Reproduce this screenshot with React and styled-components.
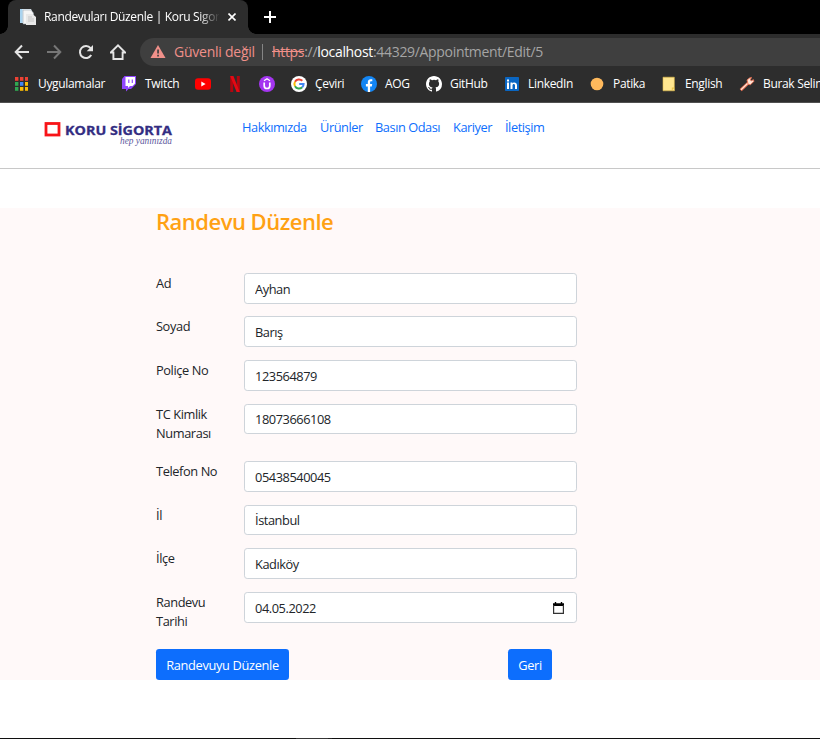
import React from 'react';
import styled, { createGlobalStyle } from 'styled-components';

const Global = createGlobalStyle`
  * { box-sizing: border-box; }
  body { margin: 0; background: #fff; overflow: hidden; font-family: "Open Sans", "Noto Sans", sans-serif; }
  svg { display: block; flex: none; }
`;

const Page = styled.div`
  width: 820px;
  height: 739px;
  display: flex;
  flex-direction: column;
  overflow: hidden;
`;
const TabStrip = styled.div`
  height: 34px;
  flex: none;
  background: #000;
  display: flex;
  padding-left: 8px;
`;
const Tab = styled.div`
  position: relative;
  width: 240px;
  height: 34px;
  background: #2d2d2d;
  border-radius: 8px 8px 0 0;
  display: flex;
  align-items: center;
  padding: 0 11px 0 12px;
  &::before, &::after {
    content: "";
    position: absolute;
    bottom: 0;
    width: 8px;
    height: 8px;
  }
  &::before { left: -8px; background: radial-gradient(circle at 0 0, transparent 7.5px, #2d2d2d 8px); }
  &::after { right: -8px; background: radial-gradient(circle at 100% 0, transparent 7.5px, #2d2d2d 8px); }
`;
const TabTitle = styled.div`
  width: 175px;
  margin: 0 9px 0 8px;
  overflow: hidden;
  white-space: nowrap;
  color: #fff;
  font-size: 12px;
  line-height: 18px;
  letter-spacing: -0.33px;
  mask-image: linear-gradient(90deg, #000 155px, transparent 176px);
`;
const NewTab = styled.div`
  display: flex;
  align-items: center;
  margin-left: 16px;
`;
const Toolbar = styled.div`
  height: 36px;
  flex: none;
  background: #2d2d2d;
  display: flex;
  align-items: center;
  padding-left: 14px;
`;
const NavIcons = styled.div`
  display: flex;
  gap: 16px;
  width: 126px;
`;
const Address = styled.div`
  flex: 1;
  height: 28px;
  border-radius: 14px 0 0 14px;
  background: #3f3f3f;
  display: flex;
  align-items: center;
  padding-left: 10px;
  font-size: 14px;
  line-height: 20px;
  color: #a5a5a5;
  white-space: nowrap;
`;
const Unsafe = styled.span`
  width: 82px;
  margin-left: 8px;
  color: #f0908a;
  letter-spacing: -0.24px;
`;
const Divider = styled.span`
  width: 1px;
  height: 16px;
  margin: 0 9px 0 6px;
  background: #858585;
`;
const Url = styled.span`
  letter-spacing: -0.32px;
  b { font-weight: 400; color: #fff; }
  s { color: #f0908a; }
`;
const Bookmarks = styled.div`
  height: 33px;
  flex: none;
  background: #2d2d2d;
  border-bottom: 1px solid #505050;
  display: flex;
  padding-left: 14px;
`;
const Bookmark = styled.div`
  flex: none;
  width: ${p => p.$w}px;
  display: flex;
  align-items: center;
  gap: ${p => p.$gap || 8}px;
  color: #fff;
  font-size: 12px;
  line-height: 18px;
  letter-spacing: -0.33px;
  white-space: nowrap;
  padding-bottom: 4px;
`;
const Header = styled.header`
  height: 66px;
  flex: none;
  border-bottom: 1px solid #c8c8c8;
  display: flex;
  padding-left: 44px;
`;
const Brand = styled.div`
  width: 198px;
  padding-top: 17px;
`;
const Nav = styled.nav`
  display: flex;
  padding-top: 15px;
`;
const NavLink = styled.a`
  width: ${p => p.$w}px;
  color: #0d6efd;
  font-size: 12.8px;
  line-height: 19px;
  letter-spacing: -0.45px;
  white-space: nowrap;
`;
const Main = styled.main`
  margin-top: 39px;
  height: 472px;
  flex: none;
  background: #fff9f9;
  padding-left: 156px;
`;
const Title = styled.h1`
  margin: 0;
  height: 65px;
  color: #ffa113;
  font-size: 22px;
  font-weight: 600;
  line-height: 27px;
  letter-spacing: -0.5px;
`;
const Row = styled.div`
  display: flex;
  height: ${p => p.$h}px;
`;
const Label = styled.label`
  width: 68px;
  margin-right: 20px;
  padding-top: 1px;
  font-size: 12.8px;
  line-height: 19px;
  letter-spacing: -0.4px;
  color: #212529;
`;
const Field = styled.div`
  width: 333px;
  height: ${p => p.$h || 31}px;
  background: #fff;
  border: 1px solid #ced4da;
  border-radius: 3.2px;
  display: flex;
  align-items: center;
  justify-content: space-between;
  padding: 1px 12px 0 10px;
`;
const Input = styled.input`
  width: 200px;
  border: 0;
  padding: 0;
  outline: 0;
  background: none;
  color: #212529;
  font: 12.8px/19px "Open Sans", "Noto Sans", sans-serif;
  letter-spacing: -0.43px;
`;
const Actions = styled.div`
  display: flex;
  width: 396px;
  justify-content: space-between;
`;
const Button = styled.button`
  width: ${p => p.$w}px;
  height: 31px;
  border: 0;
  border-radius: 3.2px;
  padding: 1px 0 0;
  background: #0d6efd;
  color: #fff;
  font: 12.8px/19px "Open Sans", "Noto Sans", sans-serif;
  letter-spacing: -0.33px;
  white-space: nowrap;
`;
const BottomEdge = styled.div`
  margin-top: auto;
  height: 1px;
  flex: none;
  background: linear-gradient(90deg, #101010 296px, #353535 296px, #353535 328px, #222 328px, #222 332px, #101010 332px);
`;

const PageIcon = () => (
  <svg width="16" height="16" viewBox="0 0 16 16">
    <path d="M0 0h11l1 2v12H0z" fill="#e7f3fc" />
    <path d="M0 0h2.5v14H0z" fill="#a9d3ef" />
    <path d="M3 1h8l2.5 3v11H3z" fill="#f5f5f5" stroke="#8c9aa5" strokeWidth=".5" />
    <path d="M6 5h6.5L16 8v8H6z" fill="#e8e8e8" />
    <path d="M8 8h4M8 10h6M8 12h6" stroke="#c4c4c4" />
  </svg>
);
const Cross = () => (
  <svg width="8" height="8" viewBox="0 0 8 8"><path d="M.5.5l7 7M7.5.5l-7 7" stroke="#fff" strokeWidth="1.6" /></svg>
);
const Plus = () => (
  <svg width="12" height="12" viewBox="0 0 12 12"><path d="M6 0v12M0 6h12" stroke="#fff" strokeWidth="2" /></svg>
);
const Arrow = ({ color, flip }) => (
  <svg width="16" height="16" viewBox="0 0 16 16">
    <path d="M15 8H2M8 1.5L1.7 8 8 14.5" transform={flip ? 'translate(16 0) scale(-1 1)' : undefined} fill="none" stroke={color} strokeWidth="2" />
  </svg>
);
const Reload = () => (
  <svg width="16" height="16" viewBox="0 0 16 16">
    <path d="M13.2 11A6 6 0 1 1 12.6 4.2" fill="none" stroke="#e4e4e4" strokeWidth="2" />
    <path d="M15 1v6.3H8.7z" fill="#e4e4e4" />
  </svg>
);
const Home = () => (
  <svg width="16" height="16" viewBox="0 0 16 16">
    <path d="M.8 8.5L8 1.4l7.2 7.1H12.6V15H3.4V8.5z" fill="none" stroke="#e4e4e4" strokeWidth="1.9" />
  </svg>
);
const Warning = () => (
  <svg width="16" height="14" viewBox="0 0 16 14">
    <path d="M8 0l7.5 13H.5z" fill="#f0908a" /><path d="M7.2 4.5h1.7v4H7.2zM7.2 9.7h1.7v1.7H7.2z" fill="#3f3f3f" />
  </svg>
);
const Apps = () => {
  const colors = ['#ed4234', '#ed4234', '#ed4234', '#30a852', '#4285f4', '#fbbc05', '#30a852', '#fbbc05', '#fbbc05'];
  return (
    <svg width="14" height="14" viewBox="0 0 14 14">
      {colors.map((c, i) => <rect key={i} x={1 + (i % 3) * 5} y={Math.floor(i / 3) * 5} width="3.4" height="3.8" fill={c} />)}
    </svg>
  );
};
const Twitch = () => (
  <svg width="16" height="16" viewBox="0 0 16 16">
    <path d="M3.5 0H15v8l-5 5H7.5L5 15.5V13H1V3z" fill="#9146ff" />
    <path d="M4.5 1H14v6.5L11.5 10H9l-2 2v-2H4.5z" fill="#fff" />
    <path d="M7.8 3.5v3.5M11.3 3.5v3.5" stroke="#9146ff" strokeWidth="1.2" />
  </svg>
);
const YouTube = () => (
  <svg width="16" height="16" viewBox="0 0 16 16"><rect y="2.2" width="16" height="11.6" rx="3" fill="#f00" /><path d="M6.3 5.4v5L10.6 8z" fill="#fff" /></svg>
);
const Netflix = () => (
  <svg width="16" height="16" viewBox="0 0 16 16">
    <path d="M3.2 0h3v16l-3 .2zM9.8 0h3v16.2l-3-.2z" fill="#b1060f" /><path d="M3.2 0h3.2l6.4 16.2-3.2-.3z" fill="#e50914" />
  </svg>
);
const Udemy = () => (
  <svg width="16" height="16" viewBox="0 0 16 16">
    <circle cx="8" cy="8" r="8" fill="#a435f0" />
    <path d="M5.2 6.5v3.2a2.8 2.8 0 0 0 5.6 0V6.5" fill="none" stroke="#fff" strokeWidth="1.7" /><path d="M5 4.7l3-1.9 3 1.9" fill="none" stroke="#fff" strokeWidth="1.3" />
  </svg>
);
const Google = () => (
  <svg width="16" height="16" viewBox="0 0 16 16">
    <circle cx="8" cy="8" r="8" fill="#fff" />
    <g fill="none" strokeWidth="2">
      <path d="M11.3 4.8A4.6 4.6 0 0 0 4 5.7" stroke="#ea4335" /><path d="M4 5.7a4.6 4.6 0 0 0 0 4.6" stroke="#fbbc05" />
      <path d="M4 10.3a4.6 4.6 0 0 0 7.2 1" stroke="#34a853" /><path d="M11.2 11.3A4.6 4.6 0 0 0 12.6 8H8.2" stroke="#4285f4" />
    </g>
  </svg>
);
const Facebook = () => (
  <svg width="16" height="16" viewBox="0 0 16 16">
    <circle cx="8" cy="8" r="8" fill="#1486f4" />
    <path d="M6.8 16v-5.6H4.9V8h1.9V6.4c0-2.2 1.1-3.2 3-3.2l1.5.1v2h-1c-1 0-1.2.5-1.2 1.2V8h2.1l-.4 2.4H9.1V16z" fill="#fff" />
  </svg>
);
const GitHub = () => (
  <svg width="16" height="16" viewBox="0 0 16 16">
    <path fill="#fff" d="M8 0C3.58 0 0 3.58 0 8c0 3.54 2.29 6.53 5.47 7.59.4.07.55-.17.55-.38 0-.19-.01-.82-.01-1.49-2.01.37-2.53-.49-2.69-.94-.09-.23-.48-.94-.82-1.13-.28-.15-.68-.52-.01-.53.63-.01 1.08.58 1.23.82.72 1.21 1.87.87 2.33.66.07-.52.28-.87.51-1.07-1.78-.2-3.64-.89-3.64-3.95 0-.87.31-1.59.82-2.15-.08-.2-.36-1.02.08-2.12 0 0 .67-.21 2.2.82a7.5 7.5 0 0 1 4 0c1.53-1.04 2.2-.82 2.2-.82.44 1.1.16 1.92.08 2.12.51.56.82 1.27.82 2.15 0 3.07-1.87 3.75-3.65 3.95.29.25.54.73.54 1.48 0 1.07-.01 1.93-.01 2.2 0 .21.15.46.55.38A8 8 0 0 0 16 8c0-4.42-3.58-8-8-8z" />
  </svg>
);
const LinkedIn = () => (
  <svg width="16" height="16" viewBox="0 0 16 16">
    <rect x="1" y="1" width="14" height="14" rx=".8" fill="#0a66c2" />
    <path d="M3 6.5h2V13H3zM3 3.5h2v1.9H3zM6.5 6.5h1.9v.9c.8-1.5 4.6-1.5 4.6 1.8V13h-2V9.6c0-2-2.5-2-2.5 0V13h-2z" fill="#fff" />
  </svg>
);
const Patika = () => (
  <svg width="16" height="16" viewBox="0 0 16 16"><circle cx="8" cy="8" r="6.3" fill="#ffb95c" /></svg>
);
const Note = () => (
  <svg width="16" height="16" viewBox="0 0 16 16"><path d="M2 1.2h11.3v10.2l.2 3.4H2z" fill="#ffe68f" stroke="#e2bd49" strokeWidth=".6" /><path d="M10.8 14.6v-3.2h2.8z" fill="#eac447" /></svg>
);
const Tool = () => (
  <svg width="16" height="16" viewBox="0 0 16 16">
    <path d="M1.7 14.2L9.8 6.5" stroke="#e66b4d" strokeWidth="3" /><path d="M2 13.7L9.8 6.2" stroke="#ffe3d5" strokeWidth="1.2" />
    <path d="M8 4l2.5-2 2-.6-1.2 2.5 1 .8 2.2-1 .3 1.7-3.4 3.4-2.3-.5z" fill="#ffe3d5" stroke="#e66b4d" strokeWidth=".9" />
  </svg>
);
const Calendar = () => (
  <svg width="11" height="12" viewBox="0 0 11 12">
    <path d="M1.8 0h1.4v1.2h4.6V0h1.4v1.2H11V4H0V1.2h1.8z" fill="#000" /><path d="M.6 3v8.3h9.8V3" fill="none" stroke="#333" strokeWidth="1.2" />
  </svg>
);
const Logo = () => (
  <svg width="132" height="30" viewBox="0 0 132 30">
    <rect x="2" y="3.5" width="13" height="11.5" fill="none" stroke="#f81418" strokeWidth="2.8" />
    <text x="21" y="14.7" textLength="107" lengthAdjust="spacingAndGlyphs" fontFamily="Open Sans" fontSize="13" fontWeight="700" fill="#332d82" stroke="#332d82" strokeWidth=".3">KORU SİGORTA</text>
    <text x="76" y="24" textLength="52" lengthAdjust="spacingAndGlyphs" fontFamily="Liberation Serif" fontSize="9.5" fontStyle="italic" fill="#5b569c">hep yanınızda</text>
  </svg>
);

const bookmarks = [
  [Apps, 'Uygulamalar', 107, 10], [Twitch, 'Twitch', 74], [YouTube, '', 32], [Netflix, '', 32], [Udemy, '', 32],
  [Google, 'Çeviri', 70], [Facebook, 'AOG', 65], [GitHub, 'GitHub', 78], [LinkedIn, 'LinkedIn', 85],
  [Patika, 'Patika', 72], [Note, 'English', 78], [Tool, 'Burak Selim', 110],
];
const links = [['Hakkımızda', 78], ['Ürünler', 55], ['Basın Odası', 78], ['Kariyer', 52], ['İletişim', 50]];
const fields = [
  ['Ad', 'Ayhan', 43], ['Soyad', 'Barış', 44], ['Poliçe No', '123564879', 44],
  ['TC Kimlik Numarası', '18073666108', 57, 30], ['Telefon No', '05438540045', 44],
  ['İl', 'İstanbul', 43, 30], ['İlçe', 'Kadıköy', 44], ['Randevu Tarihi', '04.05.2022', 57],
];

export default function App() {
  return (
    <Page>
      <Global />
      <TabStrip>
        <Tab><PageIcon /><TabTitle>Randevuları Düzenle | Koru Sigorta</TabTitle><Cross /></Tab>
        <NewTab><Plus /></NewTab>
      </TabStrip>
      <Toolbar>
        <NavIcons><Arrow color="#e4e4e4" /><Arrow color="#777" flip /><Reload /><Home /></NavIcons>
        <Address>
          <Warning /><Unsafe>Güvenli değil</Unsafe><Divider />
          <Url><s>https</s>://<b>localhost</b>:44329/Appointment/Edit/5</Url>
        </Address>
      </Toolbar>
      <Bookmarks>
        {bookmarks.map(([Icon, name, w, gap], i) => (
          <Bookmark key={i} $w={w} $gap={gap}><Icon />{name}</Bookmark>
        ))}
      </Bookmarks>
      <Header>
        <Brand><Logo /></Brand>
        <Nav>{links.map(([name, w]) => <NavLink key={name} $w={w}>{name}</NavLink>)}</Nav>
      </Header>
      <Main>
        <Title>Randevu Düzenle</Title>
        {fields.map(([label, value, h, fh]) => (
          <Row key={label} $h={h}>
            <Label>{label}</Label>
            <Field $h={fh}>
              <Input defaultValue={value} />
              {label === 'Randevu Tarihi' && <Calendar />}
            </Field>
          </Row>
        ))}
        <Actions><Button $w={133}>Randevuyu Düzenle</Button><Button $w={44}>Geri</Button></Actions>
      </Main>
      <BottomEdge />
    </Page>
  );
}
